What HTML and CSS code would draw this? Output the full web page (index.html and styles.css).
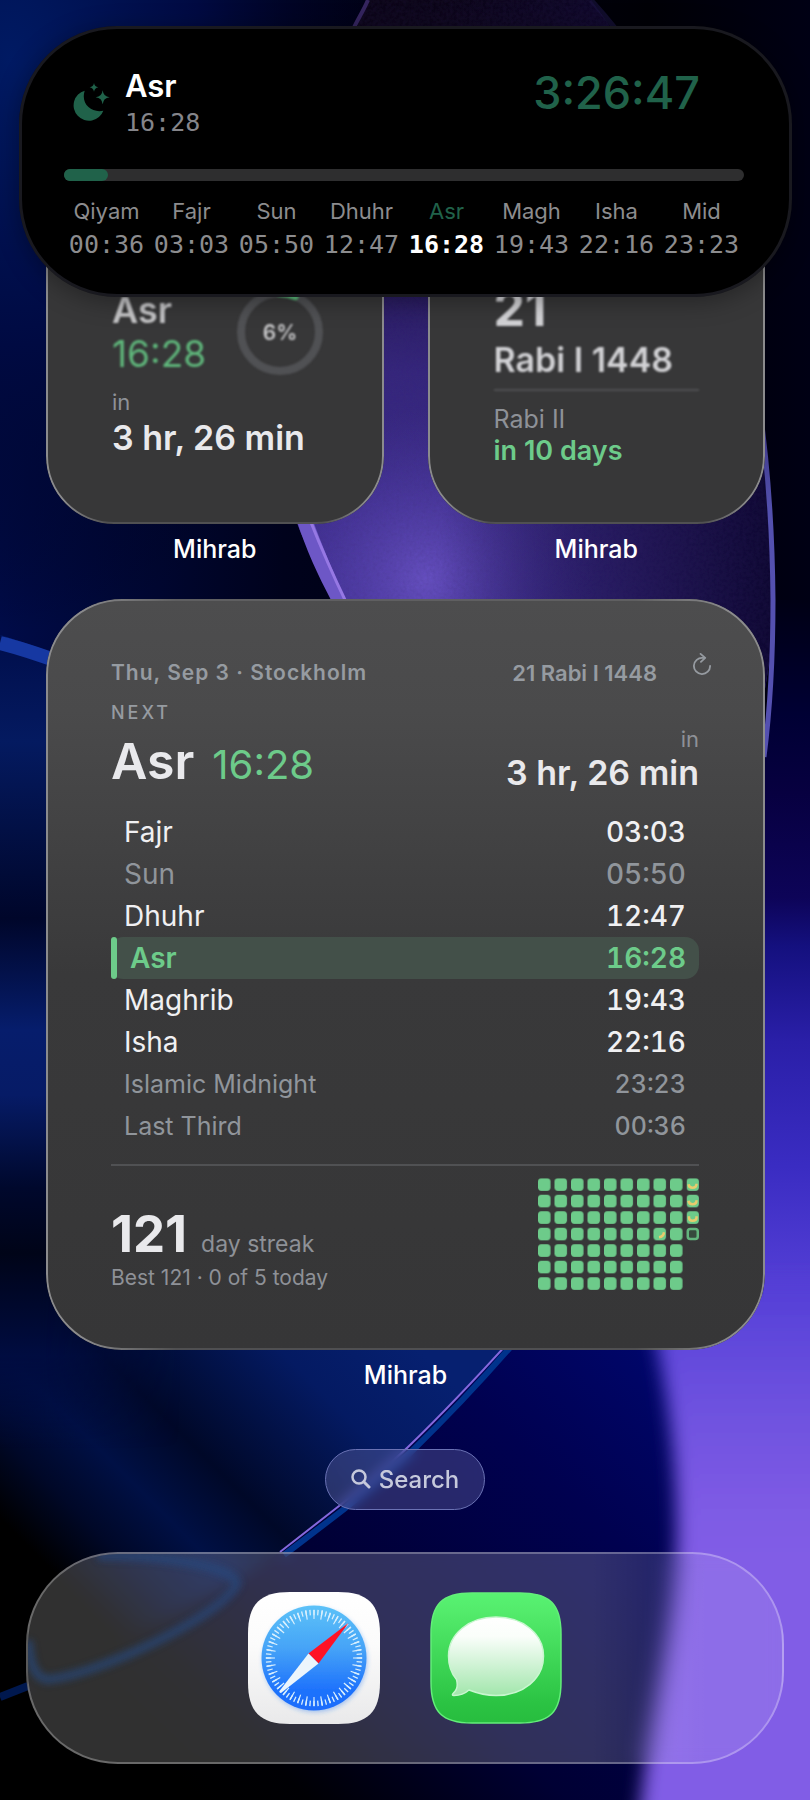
FILE: index.html
```html
<!DOCTYPE html>
<html lang="en">
<head>
<meta charset="utf-8">
<meta name="viewport" content="width=device-width, initial-scale=1">
<title>Home Screen</title>
<link rel="stylesheet" href="styles.css">
</head>
<body>
<main class="home">
  <svg class="wallpaper" viewBox="0 0 810 1800" preserveAspectRatio="none" aria-hidden="true">
    <defs>
      <radialGradient id="glowTop" gradientUnits="userSpaceOnUse" cx="10" cy="60" r="380" gradientTransform="translate(0 -30) scale(1 1.5)">
        <stop offset="0" stop-color="#001a63"/><stop offset=".5" stop-color="#000a42"/><stop offset="1" stop-color="#00021a" stop-opacity="0"/>
      </radialGradient>
      <linearGradient id="base" x1="0" y1="0" x2="1" y2="0">
        <stop offset="0" stop-color="#000b48"/><stop offset=".35" stop-color="#00021c"/><stop offset=".8" stop-color="#000006"/><stop offset="1" stop-color="#000014"/>
      </linearGradient>
      <linearGradient id="disc" gradientUnits="userSpaceOnUse" x1="0" y1="0" x2="0" y2="620">
        <stop offset="0" stop-color="#0b0516"/><stop offset=".35" stop-color="#1d1245"/><stop offset=".6" stop-color="#35267c"/><stop offset="1" stop-color="#3f2f92"/>
      </linearGradient>
      <radialGradient id="discGlow" gradientUnits="userSpaceOnUse" cx="425" cy="580" r="170">
        <stop offset="0" stop-color="#6650c0"/><stop offset="1" stop-color="#4a389f" stop-opacity="0"/>
      </radialGradient>
      <linearGradient id="discShade" gradientUnits="userSpaceOnUse" x1="440" y1="0" x2="775" y2="0">
        <stop offset="0" stop-color="#120a38" stop-opacity="0"/><stop offset=".65" stop-color="#120a38" stop-opacity=".7"/><stop offset="1" stop-color="#0d0730"/>
      </linearGradient>
      <linearGradient id="rim" gradientUnits="userSpaceOnUse" x1="0" y1="0" x2="0" y2="600">
        <stop offset="0" stop-color="#1a1440" stop-opacity=".6"/><stop offset=".6" stop-color="#2c2568"/><stop offset=".85" stop-color="#5350ae"/><stop offset="1" stop-color="#5450b0"/>
      </linearGradient>
      <linearGradient id="right" gradientUnits="userSpaceOnUse" x1="0" y1="600" x2="0" y2="1560">
        <stop offset="0" stop-color="#000014"/><stop offset=".12" stop-color="#000034"/><stop offset=".2" stop-color="#070040"/><stop offset=".31" stop-color="#0d0458"/><stop offset=".36" stop-color="#14107e"/><stop offset=".46" stop-color="#2a1fa8"/><stop offset=".59" stop-color="#3a2cc2"/><stop offset=".73" stop-color="#5741d8"/><stop offset=".82" stop-color="#6a4fde"/><stop offset=".94" stop-color="#7d5ae4"/><stop offset="1" stop-color="#815de6"/>
      </linearGradient>
      <linearGradient id="navy" gradientUnits="userSpaceOnUse" x1="640" y1="1340" x2="200" y2="1800">
        <stop offset="0" stop-color="#00066a"/><stop offset=".25" stop-color="#000150"/><stop offset=".6" stop-color="#000034"/><stop offset=".88" stop-color="#000004"/><stop offset="1" stop-color="#000"/>
      </linearGradient>
      <linearGradient id="ball" gradientUnits="userSpaceOnUse" x1="400" y1="1330" x2="50" y2="1680">
        <stop offset="0" stop-color="#062070"/><stop offset=".2" stop-color="#041a62"/><stop offset=".46" stop-color="#000828"/><stop offset=".6" stop-color="#001045"/><stop offset=".72" stop-color="#000828"/><stop offset=".84" stop-color="#000"/>
      </linearGradient>
      <linearGradient id="ballLeft" gradientUnits="userSpaceOnUse" x1="0" y1="630" x2="0" y2="1560">
        <stop offset="0" stop-color="#000d4a"/><stop offset=".12" stop-color="#041a60"/><stop offset=".31" stop-color="#00062a"/><stop offset=".43" stop-color="#061d6c"/><stop offset=".5" stop-color="#061b66"/><stop offset=".6" stop-color="#00082c"/><stop offset=".67" stop-color="#000418"/><stop offset=".78" stop-color="#000c40"/><stop offset=".88" stop-color="#000c40" stop-opacity="0"/>
      </linearGradient>
      <linearGradient id="fadeLeft" gradientUnits="userSpaceOnUse" x1="40" y1="0" x2="180" y2="0">
        <stop offset="0" stop-color="#fff"/><stop offset="1" stop-color="#000"/>
      </linearGradient>
      <mask id="leftOnly"><rect width="810" height="1800" fill="url(#fadeLeft)"/></mask>
      <filter id="soft" x="-20%" y="-20%" width="140%" height="140%"><feGaussianBlur stdDeviation="9"/></filter>
      <filter id="grain" x="0" y="0" width="100%" height="100%">
        <feTurbulence type="fractalNoise" baseFrequency=".3" numOctaves="2" seed="4"/>
        <feColorMatrix values="0 0 0 0 .04  0 0 0 0 .02  0 0 0 0 .15  0 0 0 .5 -.12"/>
        <feComposite in2="SourceGraphic" operator="in"/>
      </filter>
      <path id="discShape" d="M368 0C345 60 250 250 297 523C306 550 325 575 345 598C420 760 560 900 620 900C700 900 772 760 773 600C772 350 690 130 591 0Z"/>
    </defs>
    <rect width="810" height="1800" fill="url(#base)"/>
    <rect width="810" height="900" fill="url(#glowTop)"/>
    <use href="#discShape" fill="url(#disc)"/>
    <use href="#discShape" fill="url(#discGlow)"/>
    <use href="#discShape" fill="url(#discShade)"/>
    <use href="#discShape" fill="#000" filter="url(#grain)" opacity=".5"/>
    <path d="M296 518H312C322 545 334 575 346 600H331C318 575 306 550 296 518Z" fill="#6d57c6"/>
    <path d="M310 520C320 545 332 573 346 602" fill="none" stroke="#9678e4" stroke-width="3"/>
    <path d="M368 0C363 12 357 20 352 32" fill="none" stroke="#35255f" stroke-width="4"/>
    <path d="M775 600H810V1800H764V760C770 710 774 660 775 600Z" fill="url(#right)"/>
    <path d="M591 0C720 140 771 360 773 600C773 660 770 710 764 757" fill="none" stroke="url(#rim)" stroke-width="5"/>
    <path d="M0 1250H764V1800H0Z" fill="url(#navy)"/>
    <path d="M640 1280C672 1380 680 1500 676 1560C670 1650 648 1720 638 1830H850V1280Z" fill="url(#right)" filter="url(#soft)"/>
    <path d="M0 635C20 641 35 646 60 656V1250H580Q545 1300 503 1350C470 1385 440 1416 408 1449C385 1470 360 1490 339 1507L280 1552Q150 1640 0 1697Z" fill="url(#ball)"/>
    <path d="M0 635L60 656V1250H200V1560H0Z" fill="url(#ballLeft)" mask="url(#leftOnly)"/>
    <path d="M0 643C20 648 35 653 60 662" fill="none" stroke="#1638a2" stroke-width="14"/>
    <path d="M520 1336C484 1378 446 1418 412 1451C388 1474 362 1494 343 1510L284 1555" fill="none" stroke="#00338c" stroke-width="6"/>
    <path d="M0 1697L28 1686" fill="none" stroke="#00184e" stroke-width="8"/>
    <path d="M516 1334C480 1374 442 1414 408 1447C384 1470 358 1490 339 1506L280 1552" fill="none" stroke="#8568dd" stroke-width="2"/>
  </svg>

  <section class="widgets" aria-label="Widgets">
    <figure class="widget">
      <div class="card card-next">
        <div class="next-top">
          <div class="next-names">
            <strong class="title">Asr</strong>
            <time class="time">16:28</time>
          </div>
          <svg class="ring" viewBox="0 0 86 86" role="img" aria-label="6%">
            <circle cx="43" cy="43" r="39" fill="none" stroke="#505154" stroke-width="8"/>
            <path d="M43 4A39 39 0 0 1 58 7" fill="none" stroke="#5cc07c" stroke-width="8" stroke-linecap="round"/>
            <text x="43" y="51" text-anchor="middle">6%</text>
          </svg>
        </div>
        <span class="muted in">in</span>
        <strong class="countdown">3 hr, 26 min</strong>
      </div>
      <figcaption>Mihrab</figcaption>
    </figure>
    <figure class="widget">
      <div class="card card-date">
        <div class="date-top">
          <strong class="day">21</strong>
          <strong class="countdown">Rabi I 1448</strong>
          <hr class="rule">
        </div>
        <span class="muted upcoming">Rabi II</span>
        <span class="due">in 10 days</span>
      </div>
      <figcaption>Mihrab</figcaption>
    </figure>

    <figure class="widget wide">
      <div class="card card-day">
        <header class="day-head">
          <span class="tracked">Thu, Sep 3 · Stockholm</span>
          <span class="hijri">21 Rabi I 1448</span>
          <button class="refresh" type="button" aria-label="Refresh">
            <svg viewBox="0 0 50 60" aria-hidden="true"><path d="M27 13A22.500 22.500 0 1 0 47.500 35M21 2L34 13L22 24" fill="none" stroke="currentColor" stroke-width="5" stroke-linecap="round" stroke-linejoin="round"/></svg>
          </button>
        </header>
        <div class="hero">
          <div>
            <span class="eyebrow">NEXT</span>
            <div class="hero-line"><strong class="hero-name">Asr</strong><time class="hero-time">16:28</time></div>
          </div>
          <div class="hero-side">
            <span class="muted in">in</span>
            <strong class="countdown">3 hr, 26 min</strong>
          </div>
        </div>
        <table class="prayers">
          <tbody>
            <tr><th scope="row">Fajr</th><td>03:03</td></tr>
            <tr class="dim"><th scope="row">Sun</th><td>05:50</td></tr>
            <tr><th scope="row">Dhuhr</th><td>12:47</td></tr>
            <tr class="current"><th scope="row">Asr</th><td>16:28</td></tr>
            <tr><th scope="row">Maghrib</th><td>19:43</td></tr>
            <tr><th scope="row">Isha</th><td>22:16</td></tr>
            <tr class="dim small"><th scope="row">Islamic Midnight</th><td>23:23</td></tr>
            <tr class="dim small"><th scope="row">Last Third</th><td>00:36</td></tr>
          </tbody>
        </table>
        <hr class="rule">
        <footer class="streak">
          <div>
            <div class="streak-line"><strong class="streak-count">121</strong><span class="muted streak-unit">day streak</span></div>
            <p class="muted streak-best">Best 121 · 0 of 5 today</p>
          </div>
          <svg class="heat" viewBox="0 0 322 223" role="img" aria-label="Prayer history">
            <defs>
              <pattern id="cell" width="33" height="33" patternUnits="userSpaceOnUse"><rect width="25" height="25" rx="7" fill="#6dcb8a"/></pattern>
            </defs>
            <rect width="290" height="231" fill="url(#cell)"/>
            <rect x="297" width="25" height="92" fill="url(#cell)"/>
            <rect x="299.500" y="101.500" width="20" height="20" rx="5" fill="#36493d" stroke="#62b47c" stroke-width="5"/>
            <g fill="none" stroke="#e8cb6d" stroke-width="5">
              <path d="M301 12Q302 19 309 19Q317 19 317 11"/>
              <path d="M301 45Q302 52 309 52Q317 52 317 44"/>
              <path d="M302 76V79Q302 85 309 85Q317 85 317 79V76"/>
              <path d="M242 118Q251 117 252 108"/>
            </g>
          </svg>
        </footer>
      </div>
      <figcaption>Mihrab</figcaption>
    </figure>
  </section>

  <button class="search" type="button">
    <svg viewBox="0 0 20 20" aria-hidden="true"><circle cx="8" cy="8" r="6.500" fill="none" stroke="currentColor" stroke-width="2.500"/><path d="M12.800 12.800L18 18" stroke="currentColor" stroke-width="3" stroke-linecap="round"/></svg>
    Search
  </button>

  <nav class="dock" aria-label="Dock">
    <svg class="refraction" viewBox="0 0 757 212" preserveAspectRatio="none" aria-hidden="true">
      <defs><filter id="haze" x="-20%" y="-20%" width="140%" height="140%"><feGaussianBlur stdDeviation="4"/></filter></defs>
      <path d="M70 2C130 0 205 12 210 30C196 62 70 124 18 128C4 124 2 108 0 88" fill="none" stroke="#28487e" stroke-width="9" opacity=".7" filter="url(#haze)"/>
    </svg>
    <a class="app" href="#safari" aria-label="Safari">
      <svg viewBox="0 0 132 132" aria-hidden="true">
        <defs>
          <linearGradient id="safariTile" x1="0" y1="0" x2="0" y2="1"><stop offset="0" stop-color="#fff"/><stop offset=".4" stop-color="#fbfbfb"/><stop offset="1" stop-color="#e9e9ea"/></linearGradient>
          <linearGradient id="safariDial" x1="0" y1="0" x2="0" y2="1"><stop offset="0" stop-color="#5cc2f8"/><stop offset=".4" stop-color="#46a4f7"/><stop offset=".8" stop-color="#1f73fc"/><stop offset="1" stop-color="#1c6cfb"/></linearGradient>
          <filter id="dialShadow" x="-20%" y="-20%" width="140%" height="140%"><feDropShadow dx="1" dy="2" stdDeviation="2" flood-color="#2a78f0" flood-opacity=".35"/></filter>
        </defs>
        <path d="M42 0H90C120 0 132 12 132 42V90C132 120 120 132 90 132H42C12 132 0 120 0 90V42C0 12 12 0 42 0Z" fill="url(#safariTile)"/>
        <circle cx="66" cy="66" r="52.500" fill="url(#safariDial)" filter="url(#dialShadow)"/>
        <circle cx="66" cy="66" r="43.500" fill="none" stroke="#d9effd" stroke-width="9" stroke-dasharray="1 5" pathLength="216" stroke-dashoffset=".5"/>
        <circle cx="66" cy="66" r="45.500" fill="none" stroke="#d9effd" stroke-width="5.500" pathLength="216" stroke-dasharray="1 2" stroke-dashoffset=".5"/>
        <path d="M100.500 31L60.500 61.500L70.500 71.500Z" fill="#ff1226"/>
        <path d="M60.500 61.500L70.500 71.500L33 101Q31 101 31.500 99Z" fill="#ecf5fc"/>
      </svg>
    </a>
    <a class="app" href="#messages" aria-label="Messages">
      <svg viewBox="0 0 132 132" aria-hidden="true">
        <defs>
          <linearGradient id="msgTile" x1="0" y1="0" x2="0" y2="1"><stop offset="0" stop-color="#58f272"/><stop offset=".15" stop-color="#53eb6b"/><stop offset=".85" stop-color="#2bc343"/><stop offset="1" stop-color="#27bd3e"/></linearGradient>
          <linearGradient id="bubble" x1="0" y1="0" x2="0" y2="1"><stop offset="0" stop-color="#fff"/><stop offset=".25" stop-color="#fafefa"/><stop offset="1" stop-color="#a2e6ac"/></linearGradient>
        </defs>
        <path d="M42 1H90C120 1 131 12 131 42V90C131 120 120 131 90 131H42C12 131 1 120 1 90V42C1 12 12 1 42 1Z" fill="url(#msgTile)" stroke="#63ee7a" stroke-width="1.500"/>
        <path d="M66 25C93 25 113.500 42 113.500 64C113.500 87 93 103.500 66 103.500C56 103.500 48 101.500 39 98C34 102.500 29 103.500 24 103.500C22 103.500 22 102.500 23.500 101C27.500 97.500 28 93 26.500 87.500C21 81 18.500 73 18.500 64C18.500 42 39 25 66 25Z" fill="url(#bubble)" stroke="#c8f6cf" stroke-width="1.500"/>
      </svg>
    </a>
  </nav>

  <aside class="island" aria-label="Next prayer">
    <div class="island-head">
      <svg class="moon" viewBox="0 0 111 114" aria-hidden="true">
        <path d="M35 23A46 46 0 1 0 91 83C58 91 22 65 35 23Z"/>
        <path d="M63 0Q65 11 76 13Q65 15 63 26Q61 15 50 13Q61 11 63 0Z"/>
        <path d="M89 22Q91 41 110 43Q91 45 89 64Q87 45 68 43Q87 41 89 22Z"/>
      </svg>
      <div class="island-names">
        <strong class="island-title">Asr</strong>
        <time class="mono island-time">16:28</time>
      </div>
      <span class="timer">3:26:47</span>
    </div>
    <div class="bar" role="progressbar" aria-valuenow="6" aria-valuemin="0" aria-valuemax="100" aria-label="Elapsed"><div class="bar-fill"></div></div>
    <ul class="schedule">
      <li><span>Qiyam</span><time class="mono">00:36</time></li>
      <li><span>Fajr</span><time class="mono">03:03</time></li>
      <li><span>Sun</span><time class="mono">05:50</time></li>
      <li><span>Dhuhr</span><time class="mono">12:47</time></li>
      <li class="now"><span>Asr</span><time class="mono">16:28</time></li>
      <li><span>Magh</span><time class="mono">19:43</time></li>
      <li><span>Isha</span><time class="mono">22:16</time></li>
      <li><span>Mid</span><time class="mono">23:23</time></li>
    </ul>
  </aside>
</main>
</body>
</html>
```

FILE: styles.css
```css
* { box-sizing: border-box; }

body {
  margin: 0;
  background: #000;
  font-family: Inter, "Liberation Sans", sans-serif;
  color: #e9e9ec;
}

figure, p, ul { margin: 0; padding: 0; }
button { font: inherit; color: inherit; border: 0; padding: 0; background: none; }
strong { font-weight: 600; }

.home {
  position: relative;
  display: flex;
  flex-direction: column;
  min-height: 100vh;
  padding: 186px 26px 36px;
  overflow: hidden;
}

.wallpaper {
  position: absolute;
  inset: 0;
  width: 100%;
  height: 100%;
}

/* Widgets */
.widgets {
  position: relative;
  display: grid;
  grid-template-columns: 1fr 1fr;
  gap: 34px 44px;
  padding: 0 19px 0 20px;
}

.wide { grid-column: 1 / -1; }

figcaption {
  margin-top: 9px;
  font-size: 25px;
  line-height: 32px;
  font-weight: 500;
  text-align: center;
  color: #fff;
}

.card {
  position: relative;
  display: flex;
  flex-direction: column;
  border-radius: 68px;
  background: #373738;
}

/* Glass edge that is brightest at the sides */
.card::before {
  content: "";
  position: absolute;
  inset: 0;
  border: 2px solid #8b8b8d;
  border-radius: inherit;
  mask-image: linear-gradient(90deg, #000 5%, rgb(0 0 0 / 30%) 18%, rgb(0 0 0 / 30%) 82%, #000 95%);
  pointer-events: none;
}

.card-next, .card-date {
  aspect-ratio: 1;
  justify-content: flex-end;
}
.card-next { padding: 0 61px 66px 66px; }
.card-date { padding: 0 66px 57px; }

.muted { color: #8e9197; }
.in { font-size: 22px; line-height: 28px; }
.countdown { font-size: 34px; line-height: 40px; white-space: nowrap; }
.card-next .in { margin-bottom: 2px; }

.next-top {
  display: flex;
  align-items: center;
  justify-content: space-between;
  margin-bottom: 12px;
  filter: blur(1px);
}
.next-names { display: flex; flex-direction: column; }
.title, .time { font-size: 36px; line-height: 44px; }
.title { color: #c4c4c6; }
.time { font-size: 37px; color: #5fb67b; }
.ring { width: 86px; height: 86px; }
.ring text { font-size: 21px; font-weight: 600; fill: #c8c8ca; }

.date-top {
  display: flex;
  flex-direction: column;
  gap: 4px;
  color: #d2d2d5;
  filter: blur(1px);
}
.day { font-size: 50px; line-height: 56px; font-weight: 700; }
.rule { width: 100%; height: 2px; margin: 0; border: 0; background: #505153; }
.date-top .rule { margin: 5px 0 12px; }
.upcoming { font-size: 25px; line-height: 32px; }
.due { font-size: 27px; line-height: 32px; font-weight: 600; color: #6dcb8a; }

/* Large widget */
.card-day {
  padding: 62px 66px 60px 65px;
  border-radius: 76px;
  background: linear-gradient(#4d4d4e 0, #4a4a4b 15%, #39393a 50%, #363637 100%);
}

.day-head {
  display: flex;
  align-items: center;
  font-size: 21px;
  line-height: 24px;
  font-weight: 600;
  color: #969ba1;
}
.tracked { letter-spacing: 1px; }
.hijri { margin-left: auto; font-size: 22px; }
.refresh { width: 18px; height: 22px; margin: -18px -12px 0 36px; }
.refresh svg { display: block; width: 18px; height: 22px; }

.hero {
  display: flex;
  justify-content: space-between;
  margin-top: 16px;
}
.eyebrow {
  display: block;
  margin-bottom: 8px;
  font-size: 18px;
  line-height: 24px;
  font-weight: 500;
  letter-spacing: 3px;
  color: #969ba1;
}
.hero-line { display: flex; align-items: baseline; gap: 18px; line-height: 56px; }
.hero-name { font-size: 50px; }
.hero-time { font-size: 40px; line-height: 44px; color: #6dcb8a; }
.hero-side {
  display: flex;
  flex-direction: column;
  justify-content: flex-end;
  align-items: flex-end;
  padding-top: 24px;
}

.prayers {
  width: 100%;
  margin: 18px 0 17px;
  border-collapse: separate;
  border-spacing: 0;
  font-size: 28px;
  line-height: 42px;
  color: #f0f0f2;
}
.prayers th, .prayers td { padding: 0 13px; }
.prayers th { text-align: left; font-weight: 400; }
.prayers td { text-align: right; font-weight: 500; font-variant-numeric: tabular-nums; }
.prayers .dim { color: #90959b; }
.prayers .small th, .prayers .small td { font-size: 25px; }
.prayers .current { color: #6dcb8a; }
.prayers .current th {
  position: relative;
  padding-left: 19px;
  font-weight: 600;
  background: #435049;
  border-radius: 12px 0 0 12px;
}
.prayers .current td { font-weight: 600; background: #435049; border-radius: 0 14px 14px 0; }
.prayers .current th::before {
  content: "";
  position: absolute;
  inset: 0 auto 0 0;
  width: 6px;
  border-radius: 3px;
  background: #6dcb8a;
}

.streak {
  display: flex;
  align-items: flex-end;
  justify-content: space-between;
  margin-top: 12px;
}
.streak-line { display: flex; align-items: baseline; gap: 14px; line-height: 56px; margin-bottom: 4px; }
.streak-count { font-size: 51px; font-weight: 700; }
.streak-unit { font-size: 23px; line-height: 32px; }
.streak-best { font-size: 21px; line-height: 24px; }
.heat { width: 161px; height: 112px; }

/* Search pill and dock */
.search {
  position: relative;
  display: flex;
  align-items: center;
  gap: 8px;
  align-self: center;
  height: 61px;
  margin: 58px 0 42px;
  padding: 0 25px;
  border: 1px solid #6a72b4;
  border-radius: 31px;
  background: rgb(120 125 190 / 32%);
  backdrop-filter: blur(6px);
  font-size: 24px;
  font-weight: 500;
  color: #c6c9dc;
}
.search svg { width: 20px; height: 20px; }

.dock {
  position: relative;
  display: flex;
  justify-content: center;
  align-items: center;
  gap: 50px;
  height: 212px;
  border: 2px solid rgb(255 255 255 / 28%);
  border-radius: 92px;
  background: linear-gradient(90deg, rgb(255 255 255 / 19%) 75%, rgb(255 255 255 / 10%) 90%);
  backdrop-filter: blur(8px);
  overflow: hidden;
}
.refraction { position: absolute; inset: 0; width: 100%; height: 100%; }
.app { position: relative; display: block; width: 132px; height: 132px; }
.app svg { display: block; width: 100%; height: 100%; }

/* Live activity over the widgets */
.island {
  position: absolute;
  top: 26px;
  left: 19px;
  right: 18px;
  padding: 40px 48px 36px 45px;
  border-radius: 98px;
  background: #000;
  box-shadow: inset 0 0 0 3px rgb(90 90 110 / 28%), 0 4px 24px rgb(0 0 0 / 35%);
}
.island-head { display: flex; align-items: flex-start; padding: 0 44px 0 9px; margin-bottom: 30px; }
.moon { width: 37px; height: 38px; margin: 17px 15px 0 0; fill: #20624a; }
.island-names { display: flex; flex-direction: column; gap: 1px; }
.island-title { font-size: 31px; line-height: 40px; color: #fff; }
.mono { font-family: "DejaVu Sans Mono", "Liberation Mono", monospace; font-size: 25px; line-height: 32px; }
.island-time { color: #85858a; }
.timer {
  margin: 3px 0 0 auto;
  font-size: 45px;
  line-height: 48px;
  font-weight: 500;
  color: #20624a;
}
.bar { height: 12px; border-radius: 6px; background: #2e2e2f; }
.bar-fill { width: 6.5%; height: 12px; border-radius: 6px; background: #20624a; }
.schedule {
  display: grid;
  grid-template-columns: repeat(8, 1fr);
  margin-top: 16px;
  list-style: none;
  text-align: center;
  color: #8c8c8e;
}
.schedule li { display: flex; flex-direction: column; gap: 4px; font-size: 22px; line-height: 28px; }
.now span { color: #20624a; }
.now .mono { color: #fff; font-weight: 700; }
```
